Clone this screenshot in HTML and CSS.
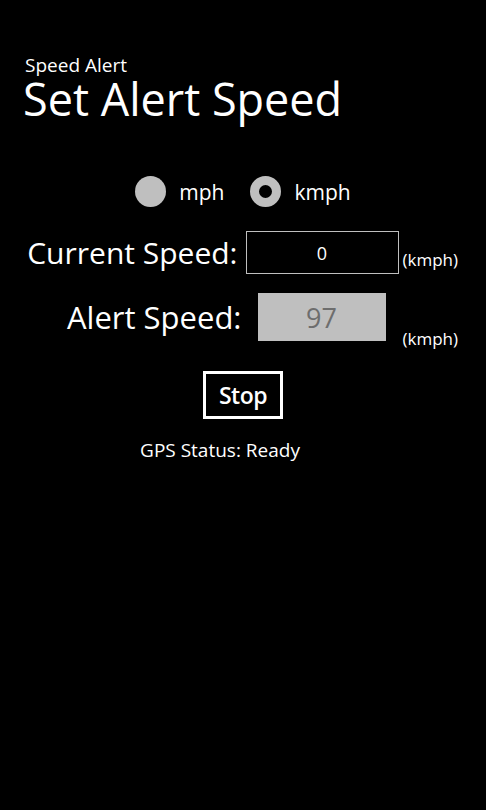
FILE: index.html
```html
<!DOCTYPE html>
<html lang="en">
<head>
    <meta charset="UTF-8">
    <meta name="viewport" content="width=device-width, initial-scale=1.0">
    <title>Speed Alert</title>
    <link rel="stylesheet" href="styles.css">
</head>
<body>
    <div class="page">
        <!-- Header -->
        <div class="header">
            <div class="app-title">Speed Alert</div>
            <h1 class="page-title">Set Alert Speed</h1>
        </div>

        <!-- Unit choice -->
        <div class="units">
            <label class="radio">
                <span class="radio-dot"></span>
                <span>mph</span>
            </label>
            <label class="radio checked">
                <span class="radio-dot"></span>
                <span>kmph</span>
            </label>
        </div>

        <!-- Speed fields -->
        <div class="speeds">
            <div class="speed-label current-label">Current Speed:</div>
            <div class="current-box">0</div>
            <div class="unit">(kmph)</div>

            <div class="speed-label alert-label">Alert Speed:</div>
            <div class="alert-box">97</div>
            <div class="unit unit-low">(kmph)</div>
        </div>

        <div class="actions">
            <button class="stop-btn">Stop</button>
        </div>

        <p class="gps-status">GPS Status: Ready</p>
    </div>
</body>
</html>
```
FILE: styles.css
```css
body {
    margin: 0;
    padding: 0;
    background-color: #000;
    color: #fff;
    font-family: "Open Sans", "Noto Sans", sans-serif;
}

.page {
    width: 486px;
    height: 810px;
    overflow: hidden;
}

.header {
    padding: 55px 0 0 25px;
}

.app-title {
    font-size: 19px;
    line-height: 20px;
}

.page-title {
    margin: 2px 0 0 -2px;
    font-size: 45px;
    font-weight: 400;
    line-height: 44px;
}

.units {
    display: flex;
    justify-content: center;
    gap: 26px;
    margin-top: 55px;
    font-size: 21px;
}

.radio {
    display: flex;
    align-items: center;
    gap: 13px;
}

.radio-dot {
    width: 31px;
    height: 31px;
    border-radius: 50%;
    background-color: #bfbfbf;
    box-sizing: border-box;
}

.radio.checked .radio-dot {
    background-color: #000;
    border: 9px solid #bfbfbf;
}

.speeds {
    display: grid;
    grid-template-columns: 214px 153px 56px;
    column-gap: 4px;
    row-gap: 19px;
    justify-content: center;
    margin-top: 24px;
}

.speed-label {
    justify-self: end;
    align-self: center;
    white-space: nowrap;
}

.current-label {
    font-size: 30px;
    margin-right: 4px;
}

.alert-label {
    font-size: 31px;
}

.current-box {
    height: 43px;
    border: 1px solid #bfbfbf;
    box-sizing: border-box;
    display: flex;
    justify-content: center;
    align-items: center;
    font-size: 18px;
}

.alert-box {
    height: 48px;
    margin: 0 13px 0 12px;
    background-color: #bfbfbf;
    color: #6d6d6d;
    display: flex;
    justify-content: center;
    align-items: center;
    font-size: 27px;
}

.unit {
    font-size: 17px;
    align-self: end;
    margin-bottom: 3px;
    white-space: nowrap;
}

.unit-low {
    margin-bottom: -9px;
}

.actions {
    display: flex;
    justify-content: center;
    margin-top: 30px;
}

.stop-btn {
    width: 80px;
    height: 48px;
    padding: 0;
    background-color: #000;
    color: #fff;
    border: 3px solid #fff;
    font-family: inherit;
    font-size: 23px;
    font-weight: 600;
    letter-spacing: -0.5px;
}

.gps-status {
    margin: 18px 0 0;
    padding-right: 46px;
    text-align: center;
    font-size: 19px;
}
```
